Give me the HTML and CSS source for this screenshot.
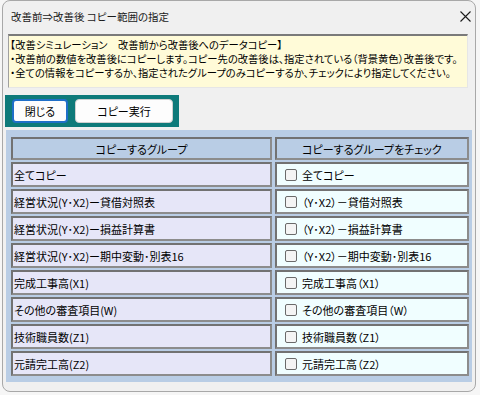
FILE: index.html
```html
<!DOCTYPE html>
<html lang="ja">
<head>
<meta charset="utf-8">
<link rel="stylesheet" href="styles.css">
</head>
<body>
<div class="window">
  <div class="titlebar">
    <span class="title">改善前⇒改善後 コピー範囲の指定</span>
    <span class="close"><svg width="11" height="11" viewBox="0 0 11 11"><path d="M0.5 0.5 L10.5 10.5 M10.5 0.5 L0.5 10.5" stroke="#1a1a1a" stroke-width="1.1" fill="none"/></svg></span>
  </div>
  <div class="info">
    <div>【改善シミュレーション　改善前から改善後へのデータコピー】</div>
    <div>・改善前の数値を改善後にコピーします。コピー先の改善後は、指定されている（背景黄色）改善後です。</div>
    <div>・全ての情報をコピーするか、指定されたグループのみコピーするか、チェックにより指定してください。</div>
  </div>
  <div class="toolbar">
    <button class="btn btn-close">閉じる</button>
    <button class="btn btn-copy">コピー実行</button>
  </div>
  <div class="panel">
    <div class="cell head">コピーするグループ</div>
    <div class="cell head">コピーするグループをチェック</div>

    <div class="cell left">全てコピー</div>
    <div class="cell right"><span class="cb"></span>全てコピー</div>

    <div class="cell left">経営状況(Y･X2)ー貸借対照表</div>
    <div class="cell right"><span class="cb"></span>（Y･X2）－貸借対照表</div>

    <div class="cell left">経営状況(Y･X2)ー損益計算書</div>
    <div class="cell right"><span class="cb"></span>（Y･X2）－損益計算書</div>

    <div class="cell left">経営状況(Y･X2)ー期中変動･別表16</div>
    <div class="cell right"><span class="cb"></span>（Y･X2）－期中変動･別表16</div>

    <div class="cell left">完成工事高(X1)</div>
    <div class="cell right"><span class="cb"></span>完成工事高（X1）</div>

    <div class="cell left">その他の審査項目(W)</div>
    <div class="cell right"><span class="cb"></span>その他の審査項目（W）</div>

    <div class="cell left">技術職員数(Z1)</div>
    <div class="cell right"><span class="cb"></span>技術職員数（Z1）</div>

    <div class="cell left">元請完工高(Z2)</div>
    <div class="cell right"><span class="cb"></span>元請完工高（Z2）</div>
  </div>
</div>
</body>
</html>
```
FILE: styles.css
```css
html, body {
  margin: 0;
  padding: 0;
}
body {
  width: 480px;
  height: 395px;
  background: #f6f6f6;
  font-family: "Noto Sans CJK JP", "Noto Sans", sans-serif;
  color: #000;
  overflow: hidden;
}
.window {
  box-sizing: border-box;
  margin-left: 2px;
  width: 474px;
  height: 392px;
  background: #f0f0f0;
  border: 1px solid #a8a8a8;
  border-radius: 8px;
  display: flex;
  flex-direction: column;
}
.titlebar {
  height: 33px;
  flex: none;
  display: flex;
  align-items: center;
  justify-content: space-between;
  padding: 0 4px 3px 8px;
  box-sizing: border-box;
}
.title {
  font-size: 10.5px;
  color: #1a1a1a;
  font-feature-settings: "palt";
}
.close {
  display: flex;
  width: 11px;
  height: 11px;
}
.info {
  box-sizing: border-box;
  margin-left: 5px;
  width: 460px;
  height: 54px;
  background: #fffbd8;
  border-top: 2px solid #7a7a7a;
  border-left: 1px solid #a0a0a0;
  border-right: 1px solid #e6e6e6;
  border-bottom: 1px solid #e6e6e6;
  padding: 2px 0 0 1px;
  font-size: 10.3px;
  line-height: 14px;
  font-feature-settings: "palt";
  white-space: nowrap;
  overflow: hidden;
}
.toolbar {
  box-sizing: border-box;
  margin-left: 2px;
  margin-top: 7px;
  width: 174px;
  height: 32px;
  background: #0e7a7a;
  display: flex;
  align-items: center;
  gap: 7px;
  padding: 0 0 0 7px;
}
.btn {
  box-sizing: border-box;
  height: 24px;
  background: #fdfdfd;
  border: 1px solid #d0d0d0;
  border-radius: 4px;
  font-family: inherit;
  font-size: 11px;
  font-feature-settings: "palt";
  color: #000;
  padding: 0;
  line-height: 20px;
}
.btn-close {
  width: 56px;
  border: 2px solid #1f6fc8;
}
.btn-copy {
  width: 98px;
}
.panel {
  box-sizing: border-box;
  margin-left: 3px;
  margin-top: 3px;
  width: 466px;
  height: 252px;
  background: #b9cde5;
  padding: 7px 3px 6px 5px;
  display: grid;
  grid-template-columns: 261px 194px;
  grid-template-rows: 23px repeat(8, 25px);
  column-gap: 3px;
  row-gap: 2px;
}
.cell {
  box-sizing: border-box;
  border: 2px solid #727272;
  border-right-color: #8c8c8c;
  border-bottom-color: #8c8c8c;
  font-size: 11px;
  font-feature-settings: "palt";
  display: flex;
  align-items: center;
  white-space: nowrap;
  overflow: hidden;
}
.head {
  background: #b9cde5;
  justify-content: center;
  font-size: 11px;
}
.left {
  background: #e6e6f8;
  padding-left: 1px;
}
.right {
  background: #f0feff;
  padding-left: 8px;
  font-size: 11px;
}
.cb {
  display: inline-block;
  box-sizing: border-box;
  width: 12px;
  height: 12px;
  border: 1px solid #6a6a6a;
  border-radius: 2px;
  background: #f4f4f4;
  margin-right: 5px;
  flex: none;
}
```
